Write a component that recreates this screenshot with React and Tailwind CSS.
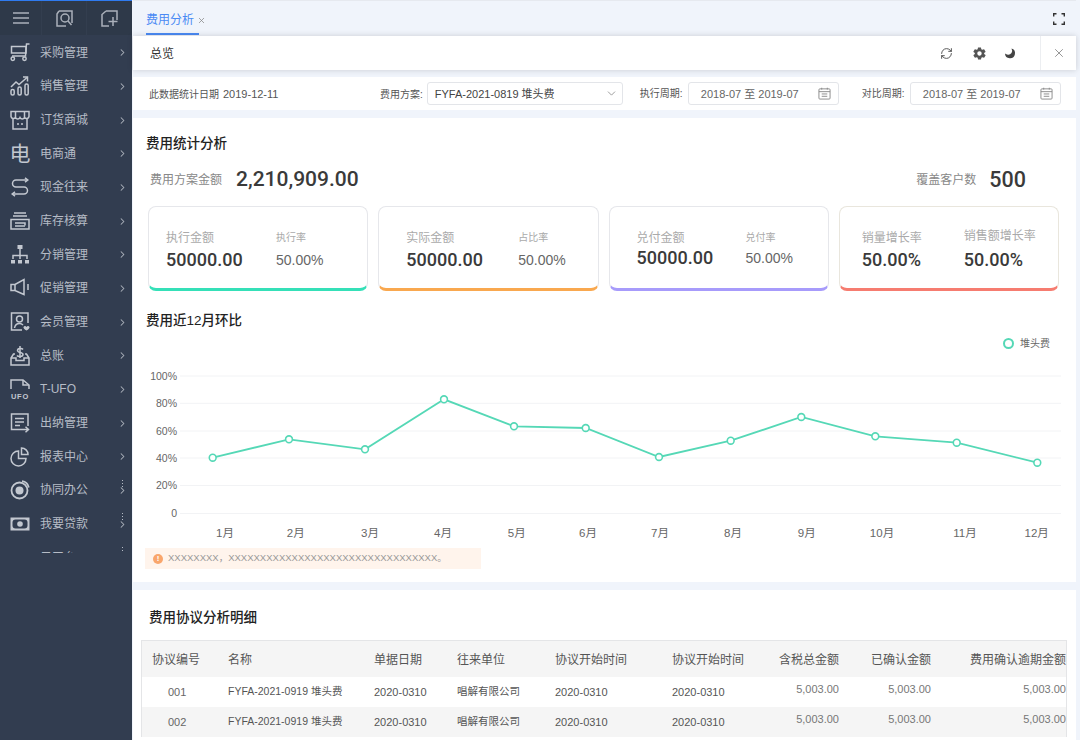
import { ChevronRight, ChevronDown, RefreshCw, X } from 'lucide-react'
import { IoMdSettings } from 'react-icons/io'

const ICON = { fill: 'none', stroke: 'currentColor', strokeWidth: 1.5 }

function SideIcon({ children }) {
  return (
    <svg viewBox="0 0 20 20" className="h-5 w-5 shrink-0" {...ICON} aria-hidden="true">
      {children}
    </svg>
  )
}

const menu = [
  {
    label: '采购管理',
    icon: (
      <>
        <path d="M19.5 1h-3L15.5 13H2" />
        <path d="M1.5 3.5h14.5V10H1.5z" />
        <circle cx="2.8" cy="15.8" r="1.7" />
        <circle cx="14.5" cy="15.8" r="1.7" />
      </>
    ),
  },
  {
    label: '销售管理',
    icon: (
      <>
        <path d="M1 11l5-5 3 2.5 8-7" />
        <path d="M13 1h4.5v4.5" />
        <rect x="1" y="13.5" width="3.2" height="5.5" rx="1.5" />
        <rect x="8" y="11" width="3.2" height="8" rx="1.5" />
        <rect x="15" y="8" width="3.2" height="11" rx="1.5" />
      </>
    ),
  },
  {
    label: '订货商城',
    icon: (
      <>
        <path d="M1 1.5h18v5a2.5 2.5 0 0 1-4.5 1 2.5 2.5 0 0 1-4.5 0 2.5 2.5 0 0 1-4.5 0A2.5 2.5 0 0 1 1 6.5z" />
        <path d="M5.5 1.5v6M14.5 1.5v6" />
        <path d="M3 9v10h14V9" />
        <path d="M8 13v2M12 13v2" />
      </>
    ),
  },
  { label: '电商通', glyph: '电' },
  {
    label: '现金往来',
    icon: (
      <>
        <path d="M17.5 3H6a3.5 3.5 0 0 0 0 7h8a3.5 3.5 0 0 1 0 7H3" />
        <path d="M15 .8L17.8 3 15 5.2" />
        <path d="M5 14.8L2.2 17 5 19.2" />
      </>
    ),
  },
  {
    label: '库存核算',
    icon: (
      <>
        <path d="M4 2h12M3 5h14" />
        <path d="M1 8.5h18V18H1z" />
        <path d="M5 12h10v2.5" />
        <path d="M5 15h10" />
      </>
    ),
  },
  {
    label: '分销管理',
    icon: (
      <>
        <path d="M10 4v10M3 14v-3.500h14V14" />
        <rect x="7.500" y="0" width="5" height="4" fill="currentColor" stroke="none" />
        <rect x="1" y="15" width="4" height="3.500" fill="currentColor" stroke="none" />
        <rect x="8" y="15" width="4" height="3.500" fill="currentColor" stroke="none" />
        <rect x="15" y="15" width="4" height="3.500" fill="currentColor" stroke="none" />
      </>
    ),
  },
  {
    label: '促销管理',
    icon: (
      <>
        <path d="M1 6.500h4L14 1.500v15L5 12.500H1z" />
        <path d="M5 6.500v6" />
        <path d="M18 6v6" />
      </>
    ),
  },
  {
    label: '会员管理',
    icon: (
      <>
        <path d="M18 11V1H1.500v17H12" />
        <circle cx="9.500" cy="7" r="3" />
        <path d="M4.500 16c.5-3 2.500-4.500 5-4.500 1.500 0 2.500.5 3.500 1.500" />
        <path d="M13.500 15c1-1.500 2.500-.8 3 0 .5-.8 2-1.500 3 0 .4 1-1 2.500-3 3.500-2-1-3.400-2.500-3-3.500z" fill="currentColor" stroke="none" />
      </>
    ),
  },
  {
    label: '总账',
    icon: (
      <>
        <path d="M5 8H3.500L1 12v7h18v-7l-2.500-4H15" />
        <path d="M1 12h5v2.500h8V12h5" />
        <path d="M13 3.500C12 2 7.500 2 7.500 4.500S13 6 13 8.500 8 11 7 9.500" />
        <path d="M10 0v12" />
      </>
    ),
  },
  {
    label: 'T-UFO',
    icon: (
      <>
        <path d="M1 10V1h12l6 5v4" />
        <path d="M13 1v5h6" />
        <text x="10" y="19.500" textAnchor="middle" fontSize="7.500" fontWeight="700" fill="currentColor" stroke="none" letterSpacing=".8">
          UFO
        </text>
      </>
    ),
  },
  {
    label: '出纳管理',
    icon: (
      <>
        <path d="M12 16.500H1.500V1h16.500v12" />
        <path d="M5 5.500h9M5 9h9M5 12.500h5" />
        <path d="M12 16.500h6.500M15.500 13.800l3 2.700-3 2.700" />
      </>
    ),
  },
  {
    label: '报表中心',
    icon: (
      <>
        <path d="M8.500 4a7.500 7.500 0 1 0 7.500 7.500H8.500z" />
        <path d="M11.500 1a6.500 6.500 0 0 1 6.500 6.500h-6.500z" />
      </>
    ),
  },
  {
    label: '协同办公',
    dots: true,
    icon: (
      <>
        <circle cx="9.500" cy="10.500" r="8" strokeWidth="1.800" />
        <circle cx="9.500" cy="10.500" r="4" fill="currentColor" stroke="none" />
        <path d="M12 1.200a8 8 0 0 1 6.800 6.300" strokeWidth="1.800" />
      </>
    ),
  },
  {
    label: '我要贷款',
    dots: true,
    icon: (
      <>
        <rect x="0.500" y="3.500" width="19" height="13" fill="currentColor" stroke="none" />
        <rect x="2.500" y="5.500" width="15" height="9" rx="3" fill="#323d50" stroke="none" />
        <circle cx="10" cy="10" r="2.800" fill="currentColor" stroke="none" />
      </>
    ),
  },
  {
    label: '云平台',
    dots: true,
    icon: <path d="M3 9a9 9 0 0 1 14 0" />,
  },
]

function SideItem({ item }) {
  return (
    <div className="relative flex h-[33.67px] items-center pl-[10px] text-[#b6bcc6]">
      {item.glyph ? (
        <span className="flex h-5 w-5 shrink-0 items-center justify-center text-[21px] leading-none text-[#c3c8d0]">{item.glyph}</span>
      ) : (
        <span className="text-[#c3c8d0]">
          <SideIcon>{item.icon}</SideIcon>
        </span>
      )}
      <span className="ml-[10px] flex-1 text-[12px] leading-none">{item.label}</span>
      <ChevronRight size={11} strokeWidth={2.200} className="mr-[4px] text-[#aeb4be]" />
      {item.dots && (
        <span className="absolute top-[6px] right-[9px] flex flex-col gap-[2px]">
          <i className="h-px w-px bg-[#b6bcc6]" />
          <i className="h-px w-px bg-[#b6bcc6]" />
          <i className="h-px w-px bg-[#b6bcc6]" />
        </span>
      )}
    </div>
  )
}

function Sidebar() {
  return (
    <aside className="flex h-full w-[132px] shrink-0 flex-col bg-[#323d50]">
      <div className="h-px bg-[#2f7bf0]" />
      <div className="flex h-[34px] shrink-0 bg-[#2e3949] text-[#aab0ba]">
        <div className="flex w-[42px] items-center justify-center border-r border-[#333e4f]">
          <svg viewBox="0 0 16 12" className="h-3 w-4" {...ICON} aria-hidden="true">
            <path d="M0 1h16M0 6h16M0 11h16" />
          </svg>
        </div>
        <div className="flex w-[45px] items-center justify-center border-r border-[#333e4f]">
          <svg viewBox="0 0 17 17" className="h-[17px] w-[17px]" {...ICON} aria-hidden="true">
            <path d="M3 1h13v12M3 1L1 4v12h9" />
            <circle cx="9" cy="8" r="4" />
            <path d="M12 11l3.500 4" />
          </svg>
        </div>
        <div className="flex flex-1 items-center justify-center">
          <svg viewBox="0 0 17 17" className="h-[17px] w-[17px]" {...ICON} aria-hidden="true">
            <path d="M5 1h11v9M5 1L1 4.500V16h7" />
            <path d="M12 7v9M7.500 11.500h9" />
          </svg>
        </div>
      </div>
      <div className="h-[518px] overflow-hidden pt-px">
        {menu.map((item) => (
          <SideItem key={item.label} item={item} />
        ))}
      </div>
    </aside>
  )
}

function DateBox({ label, className }) {
  return (
    <div className={`flex items-center ${className}`}>
      <span className="w-[44px] text-[10px] whitespace-nowrap text-[#555]">{label}</span>
      <div className="ml-[4px] flex h-[23px] w-[151px] items-center rounded-[3px] border border-[#e3e5e9] pr-[7px] pl-[12px] text-[11px] text-[#666]">
        <span className="flex-1 pt-px">2018-07 至 2019-07</span>
        <svg viewBox="0 0 14 14" className="h-[13px] w-[13px] text-[#888]" fill="none" stroke="currentColor" strokeWidth="1" aria-hidden="true">
          <rect x="1" y="2" width="12" height="11" rx="1" />
          <path d="M1 5h12M4 .8v2M10 .8v2M4 7.500h6M4 10h6" />
        </svg>
      </div>
    </div>
  )
}

function Stat({ label, value, big, labelClass = 'text-[12px]', valueGap = 'mt-[5px]', className = '' }) {
  return (
    <div className={className}>
      <div className={`leading-[14px] text-[#aaa] ${labelClass}`}>{label}</div>
      <div
        className={`${valueGap} ${
          big
            ? 'text-[18px] leading-[20px] font-medium text-[#3a3a3a] [font-family:Roboto,sans-serif]'
            : 'text-[14px] leading-[20px] text-[#666]'
        }`}
      >
        {value}
      </div>
    </div>
  )
}

const cards = [
  { a: '执行金额', b: '执行率', pad: 'pl-[17px]', w: 'w-[110px]', gap: 'mt-[5px]', color: 'border-b-[#35e0b8]' },
  { a: '实际金额', b: '占比率', pad: 'pl-[27px]', w: 'w-[112px]', gap: 'mt-[5px]', color: 'border-b-[#f9a84f]' },
  { a: '兑付金额', b: '兑付率', pad: 'pl-[27px]', w: 'w-[109px]', gap: 'mt-[3px]', color: 'border-b-[#a79bfb]' },
]

function Cards() {
  return (
    <div className="mt-[15px] ml-[15px] grid h-[85px] w-[911px] grid-cols-4 gap-[10px]">
      {cards.map((c) => (
        <div key={c.a} className={`flex rounded-[8px] border border-[#e6e7eb] border-b-[3px] pt-[24px] ${c.color} ${c.pad}`}>
          <Stat label={c.a} value="50000.00" big valueGap={c.gap} className={c.w} />
          <Stat label={c.b} value="50.00%" labelClass="text-[10px]" valueGap={c.gap} />
        </div>
      ))}
      <div className="flex rounded-[8px] border border-[#e9e6dd] border-b-[3px] border-b-[#f67c70] pt-[24px] pl-[22px]">
        <Stat label="销量增长率" value="50.00%" big className="w-[102px]" />
        <Stat label="销售额增长率" value="50.00%" big valueGap="mt-[7px]" className="-mt-[2px]" />
      </div>
    </div>
  )
}

const points = [
  [212.7, 457.7],
  [289, 439.3],
  [365, 449.3],
  [444, 399.3],
  [514, 426.3],
  [585.7, 428],
  [659, 457],
  [730.7, 440.7],
  [801.3, 417],
  [875.3, 436.3],
  [956.7, 442.7],
  [1037.3, 462.7],
]
const months = [225, 295.7, 370, 443, 516.7, 588, 660, 733, 806.7, 882, 965, 1036.7]
const ticks = [
  ['100%', 376],
  ['80%', 403.3],
  ['60%', 431],
  ['40%', 458],
  ['20%', 485.5],
  ['0', 513.5],
]

function Chart() {
  return (
    <svg viewBox="133 360 943 185" className="mt-[10px] h-[185px] w-[943px]" aria-label="费用近12月环比">
      {ticks.map(([t, y]) => (
        <g key={t}>
          <line x1="180" x2="1061" y1={y} y2={y} stroke="#f2f3f5" strokeWidth="1" />
          <text x="177" y={y + 3.5} textAnchor="end" fontSize="10.500" fill="#666">
            {t}
          </text>
        </g>
      ))}
      {months.map((x, i) => (
        <text key={x} x={x} y="537" textAnchor="middle" fontSize="11.500" fill="#666">
          {i + 1}月
        </text>
      ))}
      <polyline points={points.map((p) => p.join(',')).join(' ')} fill="none" stroke="#55d8b6" strokeWidth="1.800" />
      {points.map(([x, y]) => (
        <circle key={x} cx={x} cy={y} r="3.400" fill="#fff" stroke="#55d8b6" strokeWidth="1.600" />
      ))}
    </svg>
  )
}

const COLS = 'grid grid-cols-[86px_146px_83px_98px_117px_80px_87px_92px_135px]'
const headers = ['协议编号', '名称', '单据日期', '往来单位', '协议开始时间', '协议开始时间', '含税总金额', '已确认金额', '费用确认逾期金额']

function Row({ no, className = '' }) {
  return (
    <div className={`${COLS} h-[30px] items-center text-[11px] text-[#555] ${className}`}>
      <span className="pl-[26px] text-[#666]">{no}</span>
      <span className="text-[10.500px]">FYFA-2021-0919 堆头费</span>
      <span>2020-0310</span>
      <span className="text-[10.500px]">唱解有限公司</span>
      <span>2020-0310</span>
      <span>2020-0310</span>
      <span className="pb-[6px] text-right text-[#777]">5,003.00</span>
      <span className="pb-[6px] text-right text-[#777]">5,003.00</span>
      <span className="pb-[6px] text-right text-[#777]">5,003.00</span>
    </div>
  )
}

export default function App() {
  return (
    <div className="flex h-[740px] w-[1080px] overflow-hidden bg-[#f0f4fb] [font-family:'Liberation_Sans','Noto_Sans_CJK_SC',sans-serif]">
      <Sidebar />
      <main className="flex min-w-0 flex-1 flex-col pr-[4px] pl-px">
        <div className="flex h-[36px] shrink-0 border-t border-[#e6e9ef] pl-[13px]">
          <div className="flex h-[34px] w-[53px] items-center border-b-2 border-[#4a8af4] pt-[6px] text-[12px] whitespace-nowrap text-[#4a8af4]">
            费用分析
            <X size={9} strokeWidth={2} className="ml-[3px] shrink-0 text-[#888]" />
          </div>
          <div className="flex flex-1 items-center justify-end pr-[11px]">
            <svg viewBox="0 0 12 12" className="h-3 w-3 text-[#333]" fill="none" stroke="currentColor" strokeWidth="1.400" aria-hidden="true">
              <path d="M.7 3.500V.7h2.800M8.500.7h2.800v2.800M11.300 8.500v2.800H8.500M3.500 11.300H.7V8.500" />
            </svg>
          </div>
        </div>

        <header className="flex h-[34px] shrink-0 items-center bg-white pl-[17px] shadow-[0_0_6px_rgba(0,0,0,0.16)]">
          <span className="flex-1 pt-px text-[12px] text-[#333]">总览</span>
          <RefreshCw size={13} strokeWidth={1.800} className="mr-[19px] text-[#555]" />
          <IoMdSettings size={15} className="mr-[17px] text-[#555]" />
          <svg viewBox="0 0 12 12" className="mr-[24px] h-3 w-3 text-[#444]" fill="currentColor" aria-hidden="true">
            <path d="M7.500 1.500A5 5 0 1 1 1 6.500 4.500 4.500 0 0 0 7.500 6a4.500 4.500 0 0 0 0-4.500z" />
          </svg>
          <div className="flex h-full w-[36px] items-center justify-center border-l border-[#eceef1]">
            <X size={14} strokeWidth={1.500} className="text-[#888]" />
          </div>
        </header>

        <div className="mt-[7px] flex h-[33px] shrink-0 items-center bg-white pl-[16px]">
          <span className="w-[231px] pt-px text-[10px] text-[#555]">
            此数据统计日期<span className="ml-[4px] text-[11px]">2019-12-11</span>
          </span>
          <span className="pt-px text-[10px] text-[#555]">费用方案:</span>
          <div className="ml-[4px] flex h-[23px] w-[196px] items-center rounded-[3px] border border-[#e3e5e9] pr-[4px] pl-[7px] text-[11px] text-[#444]">
            <span className="flex-1 pt-px">FYFA-2021-0819 堆头费</span>
            <ChevronDown size={13} strokeWidth={1.500} className="text-[#888]" />
          </div>
          <DateBox label="执行周期:" className="ml-[17px]" />
          <DateBox label="对比周期:" className="ml-[23px]" />
        </div>

        <section className="mt-[8px] h-[464px] shrink-0 bg-white pt-[16px]">
          <h2 className="ml-[13px] text-[13.500px] leading-[20px] font-medium text-[#222]">费用统计分析</h2>
          <div className="mt-[15px] flex h-[22px] items-center pr-[50px] pl-[17px]">
            <span className="text-[12px] text-[#888]">费用方案金额</span>
            <span className="ml-[14px] flex-1 text-[21px] font-medium text-[#3a3a3a] [font-family:Roboto,sans-serif]">2,210,909.00</span>
            <span className="text-[12px] text-[#888]">覆盖客户数</span>
            <span className="ml-[13px] text-[21.500px] font-medium text-[#3a3a3a] [font-family:Roboto,sans-serif]">500</span>
          </div>
          <Cards />
          <h2 className="mt-[20px] ml-[13px] text-[13.500px] leading-[20px] font-medium text-[#222]">费用近12月环比</h2>
          <div className="mt-[5px] flex h-[14px] items-center justify-end pr-[26px] text-[10px] text-[#666]">
            <i className="mr-[6px] h-[11px] w-[11px] rounded-full border-2 border-[#55d8b6]" />
            堆头费
          </div>
          <Chart />
          <div className="mt-[3px] ml-[12px] flex h-[21px] w-[336px] items-center bg-[#fff4ec] pl-[8px] text-[9.500px] text-[#999]">
            <i className="mr-[5px] flex h-[10px] w-[10px] items-center justify-center rounded-full bg-[#f9a66c] text-[8px] leading-none font-bold text-white not-italic">!</i>
            XXXXXXXX，XXXXXXXXXXXXXXXXXXXXXXXXXXXXXXXXX。
          </div>
        </section>

        <section className="mt-[8px] flex-1 bg-white pt-[18px]">
          <h2 className="ml-[16px] text-[13.500px] leading-[20px] font-medium text-[#222]">费用协议分析明细</h2>
          <div className="mt-[12px] ml-[8px] w-[926px] border-x border-t border-[#e4e5e7]">
            <div className={`${COLS} h-[36px] items-center bg-[#f5f5f5] pt-px text-[12px] text-[#555]`}>
              {headers.map((h, i) => (
                <span key={i} className={i === 0 ? 'pl-[10px]' : i > 5 ? 'text-right whitespace-nowrap' : ''}>
                  {h}
                </span>
              ))}
            </div>
            <Row no="001" />
            <Row no="002" className="bg-[#f5f5f5]" />
          </div>
        </section>
      </main>
    </div>
  )
}
